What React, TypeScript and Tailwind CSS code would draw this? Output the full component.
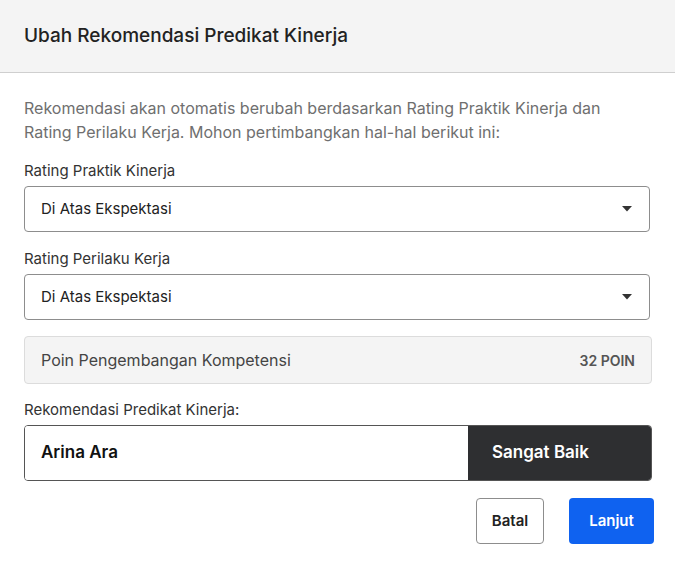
import React from "react";

function Select({ value }: { value: string }) {
  return (
    <div className="flex h-[46px] items-center justify-between rounded border border-[#8d8d8d] bg-white pl-4 pr-[16px]">
      <span className="text-[15px] text-[#222]">{value}</span>
      <svg width="10" height="6" viewBox="0 0 10 6" className="mr-[1px]">
        <path d="M0 0 L10 0 L5 5.5 Z" fill="#333" />
      </svg>
    </div>
  );
}

export default function App() {
  return (
    <div className="w-[675px] h-[568px] bg-white" style={{ fontFamily: "Inter, 'Noto Sans', sans-serif" }}>
      <div className="flex h-[73px] items-center border-b border-[#cfcfcf] bg-[#f4f4f4] px-6">
        <h1 className="text-[19px] font-medium text-[#222]">Ubah Rekomendasi Predikat Kinerja</h1>
      </div>
      <div className="px-6 pt-[23px]">
        <p className="text-[16px] leading-6 text-[#6f6f6f]">
          Rekomendasi akan otomatis berubah berdasarkan Rating Praktik Kinerja dan
          <br />
          Rating Perilaku Kerja. Mohon pertimbangkan hal-hal berikut ini:
        </p>
        <div className="mt-[17px] text-[15px] leading-5 text-[#333]">Rating Praktik Kinerja</div>
        <div className="mt-[5px] w-[626px]">
          <Select value="Di Atas Ekspektasi" />
        </div>
        <div className="mt-[17px] text-[15px] leading-5 text-[#333]">Rating Perilaku Kerja</div>
        <div className="mt-[5px] w-[626px]">
          <Select value="Di Atas Ekspektasi" />
        </div>
        <div className="mt-[16px] flex h-[48px] w-[628px] items-center justify-between rounded border border-[#dcdcdc] bg-[#f4f4f4] pl-4 pr-4">
          <span className="text-[16px] text-[#444]">Poin Pengembangan Kompetensi</span>
          <span className="text-[14px] font-semibold text-[#555]">32 POIN</span>
        </div>
        <div className="mt-[16px] text-[15px] leading-5 text-[#333]">Rekomendasi Predikat Kinerja:</div>
        <div className="mt-[5px] flex h-[56px] w-[628px] overflow-hidden rounded border border-[#555]">
          <div className="flex flex-1 items-center bg-white pl-4 text-[17px] font-semibold text-[#111]">Arina Ara</div>
          <div className="flex w-[183px] items-center bg-[#2e2f31] pl-6 text-[17px] font-semibold text-white">Sangat Baik</div>
        </div>
        <div className="mt-[17px] flex w-[630px] justify-end gap-[25px]">
          <button className="h-[46px] w-[68px] rounded border border-[#8d8d8d] bg-white text-[15px] font-semibold text-[#222]">Batal</button>
          <button className="h-[46px] w-[85px] rounded bg-[#0f62f0] text-[15px] font-semibold text-white">Lanjut</button>
        </div>
      </div>
    </div>
  );
}
